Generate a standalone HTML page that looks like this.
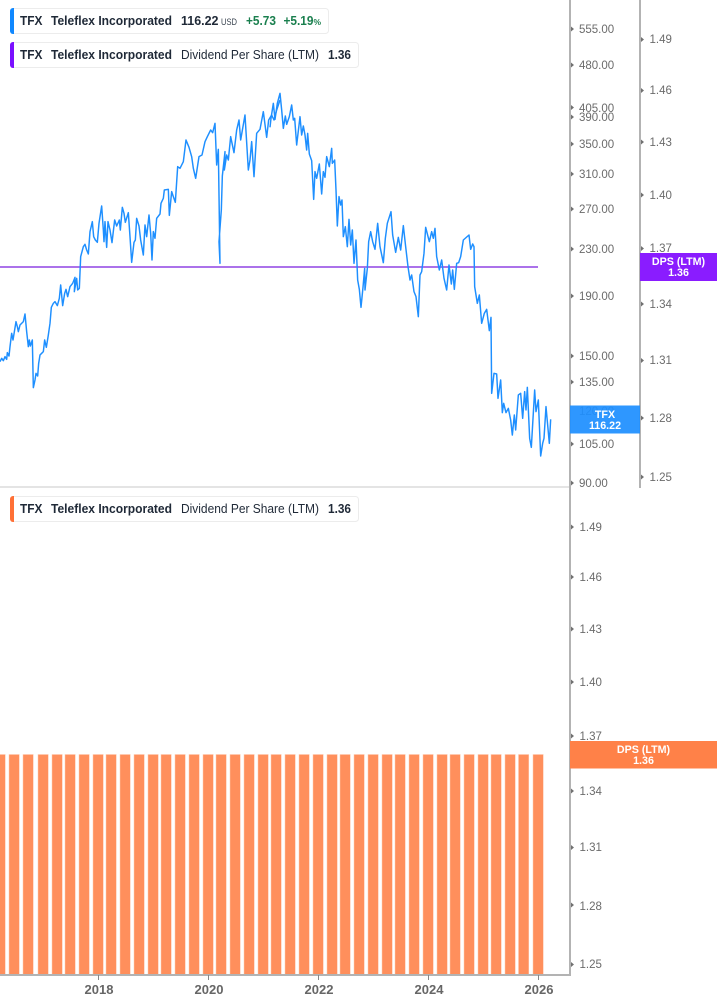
<!DOCTYPE html>
<html><head><meta charset="utf-8"><style>
html,body{margin:0;padding:0;background:#fff;width:717px;height:1005px;overflow:hidden}
svg{display:block}
text{font-family:"Liberation Sans",sans-serif}
.a{font-size:11.5px;fill:#6b6b6b}
.l{font-size:12.5px;fill:#1f2937;font-weight:bold}
.n{font-size:12.5px;fill:#1f2937}
.g{font-size:12.5px;fill:#1a7f4e;font-weight:bold}
.w{font-size:10.7px;fill:#fff;font-weight:bold;text-anchor:middle}
.y{font-size:13px;fill:#666;font-weight:bold;text-anchor:middle}
</style></head><body>
<svg width="717" height="1005" viewBox="0 0 717 1005" xmlns="http://www.w3.org/2000/svg">
<rect width="717" height="1005" fill="#fff"/>
<rect x="0" y="486" width="570" height="2" fill="#e4e4e4"/>
<rect x="0" y="266" width="538" height="2" fill="#ab72ea"/>
<g fill="none" stroke="#1e8fff" stroke-width="4.4" stroke-linejoin="round">
<path transform="translate(0,90) scale(.33333)" d="M0 815L5 805 10 812 15 800 20 808 22 788 27 798 30 770 35 730 39 750 48 695 52 710 55 725 60 705 70 695 75 672 80 725 85 770 88 750 91 768 97 750 100 893 105 870 108 850 113 858 116 820 120 795 125 790 130 785 134 750 139 772 145 735 150 700 154 652 160 640 165 635 172 647 178 625 182 585 188 647 194 610 198 598 203 620 210 590 218 580 225 562 223 605 230 565 233 600 238 595 242 500 250 470 255 463 260 480 265 492 270 425 277 395 281 440 286 450 292 457 297 400 305 348 310 420 312 455 315 395 320 472 324 395 330 420 336 458 344 390 350 408 358 390 361 420 367 352 372 370 376 397 385 368 390 440 395 517 402 457 406 450 410 385 417 408 422 450 430 495 435 405 440 440 447 375 452 430 456 510 460 425 465 445 470 385 480 372 483 340 490 325 493 300 505 298 508 376 515 305 520 320 526 337 533 230 540 235 550 215 558 150 567 172 575 200 580 235 587 265 597 200 606 195 615 155 622 140 632 120 638 128 645 100 650 225 655 178 660 520 657 455 664 360 667 258 675 185 673 240 680 195 685 210 692 140 702 188 710 120 717 90 722 150 735 75 745 240 750 210 755 155 762 260 770 130 780 118 790 65 800 142 806 90 815 75 822 90 830 60 840 30"/>
<path transform="translate(270,90) scale(.33333)" d="M0 112L3 85 10 40 15 88 22 40 30 10 35 60 40 115 46 78 50 103 58 80 65 45 70 90 74 85 80 165 90 80 95 135 100 108 105 135 110 180 113 130 118 192 125 212 131 328 135 245 140 265 148 222 155 312 160 245 165 262 170 200 178 230 185 175 187 220 194 210 198 300 202 408 207 320 212 345 216 330 220 440 226 410 232 470 237 388 242 465 247 420 252 520 258 450 263 570 268 598 273 652 279 592 284 535 285 600 292 535 296 455 302 425 308 455 315 478 323 400 330 470 340 518 346 445 352 400 363 365 368 435 377 487 385 442 392 480 400 407 407 470 414 530 420 570 425 555 432 605 438 620 445 680 450 555 455 545 462 490 467 412 478 455 485 425 490 445 495 415 500 500 508 540 515 510 522 565 530 600 537 525 544 582 548 540 553 598 560 520 566 518 572 500 580 450 597 435 602 478 608 462 612 470 614 590 622 640 628 615 635 700 643 670 650 658 658 722 663 682 665 910 672 850 680 852 684 925 692 870 697 968 701 940 708 968 715 955 722 990 727 1035 733 975 737 1020 745 915 752 910 758 985 764 905 768 960 772 892 779 1045 784 1072 794 900 798 965 805 930 812 1098 818 1060 822 1045 828 950 838 1060 842 988"/>
</g>
<g fill="#ff8f5c" stroke="#ffc9ae" stroke-width=".5">
<rect x="-5" y="754.500" width="10.300" height="220"/><rect x="9" y="754.500" width="10.300" height="220"/><rect x="23" y="754.500" width="10.300" height="220"/><rect x="38" y="754.500" width="10.300" height="220"/><rect x="52" y="754.500" width="10.300" height="220"/><rect x="65" y="754.500" width="10.300" height="220"/><rect x="79" y="754.500" width="10.300" height="220"/><rect x="93" y="754.500" width="10.300" height="220"/><rect x="106" y="754.500" width="10.300" height="220"/><rect x="120" y="754.500" width="10.300" height="220"/><rect x="134" y="754.500" width="10.300" height="220"/><rect x="148" y="754.500" width="10.300" height="220"/><rect x="161" y="754.500" width="10.300" height="220"/><rect x="175" y="754.500" width="10.300" height="220"/><rect x="189" y="754.500" width="10.300" height="220"/><rect x="203" y="754.500" width="10.300" height="220"/><rect x="216" y="754.500" width="10.300" height="220"/><rect x="230" y="754.500" width="10.300" height="220"/><rect x="244" y="754.500" width="10.300" height="220"/><rect x="258" y="754.500" width="10.300" height="220"/><rect x="271" y="754.500" width="10.300" height="220"/><rect x="285" y="754.500" width="10.300" height="220"/><rect x="299" y="754.500" width="10.300" height="220"/><rect x="313" y="754.500" width="10.300" height="220"/><rect x="327" y="754.500" width="10.300" height="220"/><rect x="340" y="754.500" width="10.300" height="220"/><rect x="354" y="754.500" width="10.300" height="220"/><rect x="368" y="754.500" width="10.300" height="220"/><rect x="382" y="754.500" width="10.300" height="220"/><rect x="395" y="754.500" width="10.300" height="220"/><rect x="409" y="754.500" width="10.300" height="220"/><rect x="423" y="754.500" width="10.300" height="220"/><rect x="437" y="754.500" width="10.300" height="220"/><rect x="450" y="754.500" width="10.300" height="220"/><rect x="464" y="754.500" width="10.300" height="220"/><rect x="478" y="754.500" width="10.300" height="220"/><rect x="491" y="754.500" width="10.300" height="220"/><rect x="505" y="754.500" width="10.300" height="220"/><rect x="518.500" y="754.500" width="10.300" height="220"/><rect x="533" y="754.500" width="10.300" height="220"/>
</g>
<rect x="569" y="0" width="2" height="975" fill="#b3b3b3"/>
<rect x="639" y="0" width="2" height="488" fill="#b3b3b3"/>
<rect x="0" y="974" width="571" height="2" fill="#b3b3b3"/>
<rect x="98" y="975" width="1" height="5" fill="#888"/><rect x="538" y="975" width="1" height="5" fill="#888"/>
<rect x="208" y="975" width="1" height="5" fill="#888"/><rect x="318" y="975" width="1" height="5" fill="#888"/><rect x="428" y="975" width="1" height="5" fill="#888"/>
<g fill="#707070">
<path d="M571 26.500l3 2.500-3 2.500zM571 62.500l3 2.500-3 2.500zM571 105l3 2.500-3 2.500zM571 114.500l3 2.500-3 2.500zM571 141.500l3 2.500-3 2.500zM571 171.500l3 2.500-3 2.500zM571 206.500l3 2.500-3 2.500zM571 246.500l3 2.500-3 2.500zM571 293.500l3 2.500-3 2.500zM571 353.500l3 2.500-3 2.500zM571 379.500l3 2.500-3 2.500zM571 441.500l3 2.500-3 2.500zM571 480.500l3 2.500-3 2.500z"/>
<path d="M641 37l3 2.500-3 2.500zM641 88l3 2.500-3 2.500zM641 139.500l3 2.500-3 2.500zM641 192.500l3 2.500-3 2.500zM641 246l3 2.500-3 2.500zM641 301.500l3 2.500-3 2.500zM641 358l3 2.500-3 2.500zM641 415.500l3 2.500-3 2.500zM641 474.500l3 2.500-3 2.500z"/>
<path d="M571 524.500l3 2.500-3 2.500zM571 574.500l3 2.500-3 2.500zM571 626.500l3 2.500-3 2.500zM571 679.500l3 2.500-3 2.500zM571 733.500l3 2.500-3 2.500zM571 788.500l3 2.500-3 2.500zM571 845l3 2.500-3 2.500zM571 902.500l3 2.500-3 2.500zM571 962l3 2.500-3 2.500z"/>
</g>
<g>
<text class="a" x="579" y="33">555.00</text><text class="a" x="579" y="69">480.00</text><text class="a" x="579" y="112">405.00</text><text class="a" x="579" y="121">390.00</text><text class="a" x="579" y="148">350.00</text><text class="a" x="579" y="178">310.00</text><text class="a" x="579" y="213">270.00</text><text class="a" x="579" y="253">230.00</text><text class="a" x="579" y="300">190.00</text><text class="a" x="579" y="360">150.00</text><text class="a" x="579" y="386">135.00</text><text class="a" x="579" y="415">120.00</text><text class="a" x="579" y="448">105.00</text><text class="a" x="579" y="487">90.00</text>
<text class="a" x="649.500" y="43">1.49</text><text class="a" x="649.500" y="94">1.46</text><text class="a" x="649.500" y="146">1.43</text><text class="a" x="649.500" y="199">1.40</text><text class="a" x="649.500" y="252">1.37</text><text class="a" x="649.500" y="308">1.34</text><text class="a" x="649.500" y="364">1.31</text><text class="a" x="649.500" y="422">1.28</text><text class="a" x="649.500" y="481">1.25</text>
<text class="a" x="579.500" y="531">1.49</text><text class="a" x="579.500" y="581">1.46</text><text class="a" x="579.500" y="633">1.43</text><text class="a" x="579.500" y="686">1.40</text><text class="a" x="579.500" y="740">1.37</text><text class="a" x="579.500" y="795">1.34</text><text class="a" x="579.500" y="851">1.31</text><text class="a" x="579.500" y="910">1.28</text><text class="a" x="579.500" y="968">1.25</text>
</g>
<rect x="640" y="253" width="77" height="28" fill="#8a1cff"/>
<text class="w" x="678.500" y="265">DPS (LTM)</text><text class="w" x="678.500" y="276">1.36</text>
<rect x="570" y="405.500" width="70" height="28" fill="#1e8fff" fill-opacity=".93"/>
<text class="w" x="605" y="418">TFX</text><text class="w" x="605" y="429">116.22</text>
<rect x="570" y="741" width="147" height="27.500" fill="#ff8148"/>
<text class="w" x="643.500" y="753">DPS (LTM)</text><text class="w" x="643.500" y="764">1.36</text>
<text class="y" x="99" y="994">2018</text><text class="y" x="209" y="994">2020</text><text class="y" x="319" y="994">2022</text><text class="y" x="429" y="994">2024</text><text class="y" x="539" y="994">2026</text>
<rect x="10.500" y="8.500" width="318" height="25" rx="3" fill="#fff" stroke="#ececec"/>
<path d="M14 8H13a3 3 0 0 0-3 3V31a3 3 0 0 0 3 3H14z" fill="#1088ff"/>
<text class="l" x="20" y="25" textLength="22.500" lengthAdjust="spacingAndGlyphs">TFX</text>
<text class="l" x="51" y="25" textLength="121" lengthAdjust="spacingAndGlyphs">Teleflex Incorporated</text>
<text class="l" x="181" y="25" textLength="37.500" lengthAdjust="spacingAndGlyphs">116.22</text>
<text x="221" y="25" font-size="9" fill="#3a4450" textLength="16" lengthAdjust="spacingAndGlyphs">USD</text>
<text class="g" x="246" y="25" textLength="30" lengthAdjust="spacingAndGlyphs">+5.73</text>
<text class="g" x="283.500" y="25" textLength="30" lengthAdjust="spacingAndGlyphs">+5.19</text>
<text x="313.500" y="25" font-size="8.500" font-weight="bold" fill="#1a7f4e">%</text>
<rect x="10.500" y="42.500" width="348" height="25" rx="3" fill="#fff" stroke="#ececec"/>
<path d="M14 42H13a3 3 0 0 0-3 3V65a3 3 0 0 0 3 3H14z" fill="#7a10ff"/>
<text class="l" x="20" y="59" textLength="22.500" lengthAdjust="spacingAndGlyphs">TFX</text>
<text class="l" x="51" y="59" textLength="121" lengthAdjust="spacingAndGlyphs">Teleflex Incorporated</text>
<text class="n" x="181" y="59" textLength="138" lengthAdjust="spacingAndGlyphs">Dividend Per Share (LTM)</text>
<text class="l" x="328" y="59" textLength="23" lengthAdjust="spacingAndGlyphs">1.36</text>
<rect x="10.500" y="496.500" width="348" height="25" rx="3" fill="#fff" stroke="#ececec"/>
<path d="M14 496H13a3 3 0 0 0-3 3V519a3 3 0 0 0 3 3H14z" fill="#ff7036"/>
<text class="l" x="20" y="513" textLength="22.500" lengthAdjust="spacingAndGlyphs">TFX</text>
<text class="l" x="51" y="513" textLength="121" lengthAdjust="spacingAndGlyphs">Teleflex Incorporated</text>
<text class="n" x="181" y="513" textLength="138" lengthAdjust="spacingAndGlyphs">Dividend Per Share (LTM)</text>
<text class="l" x="328" y="513" textLength="23" lengthAdjust="spacingAndGlyphs">1.36</text>
</svg>
</body></html>
